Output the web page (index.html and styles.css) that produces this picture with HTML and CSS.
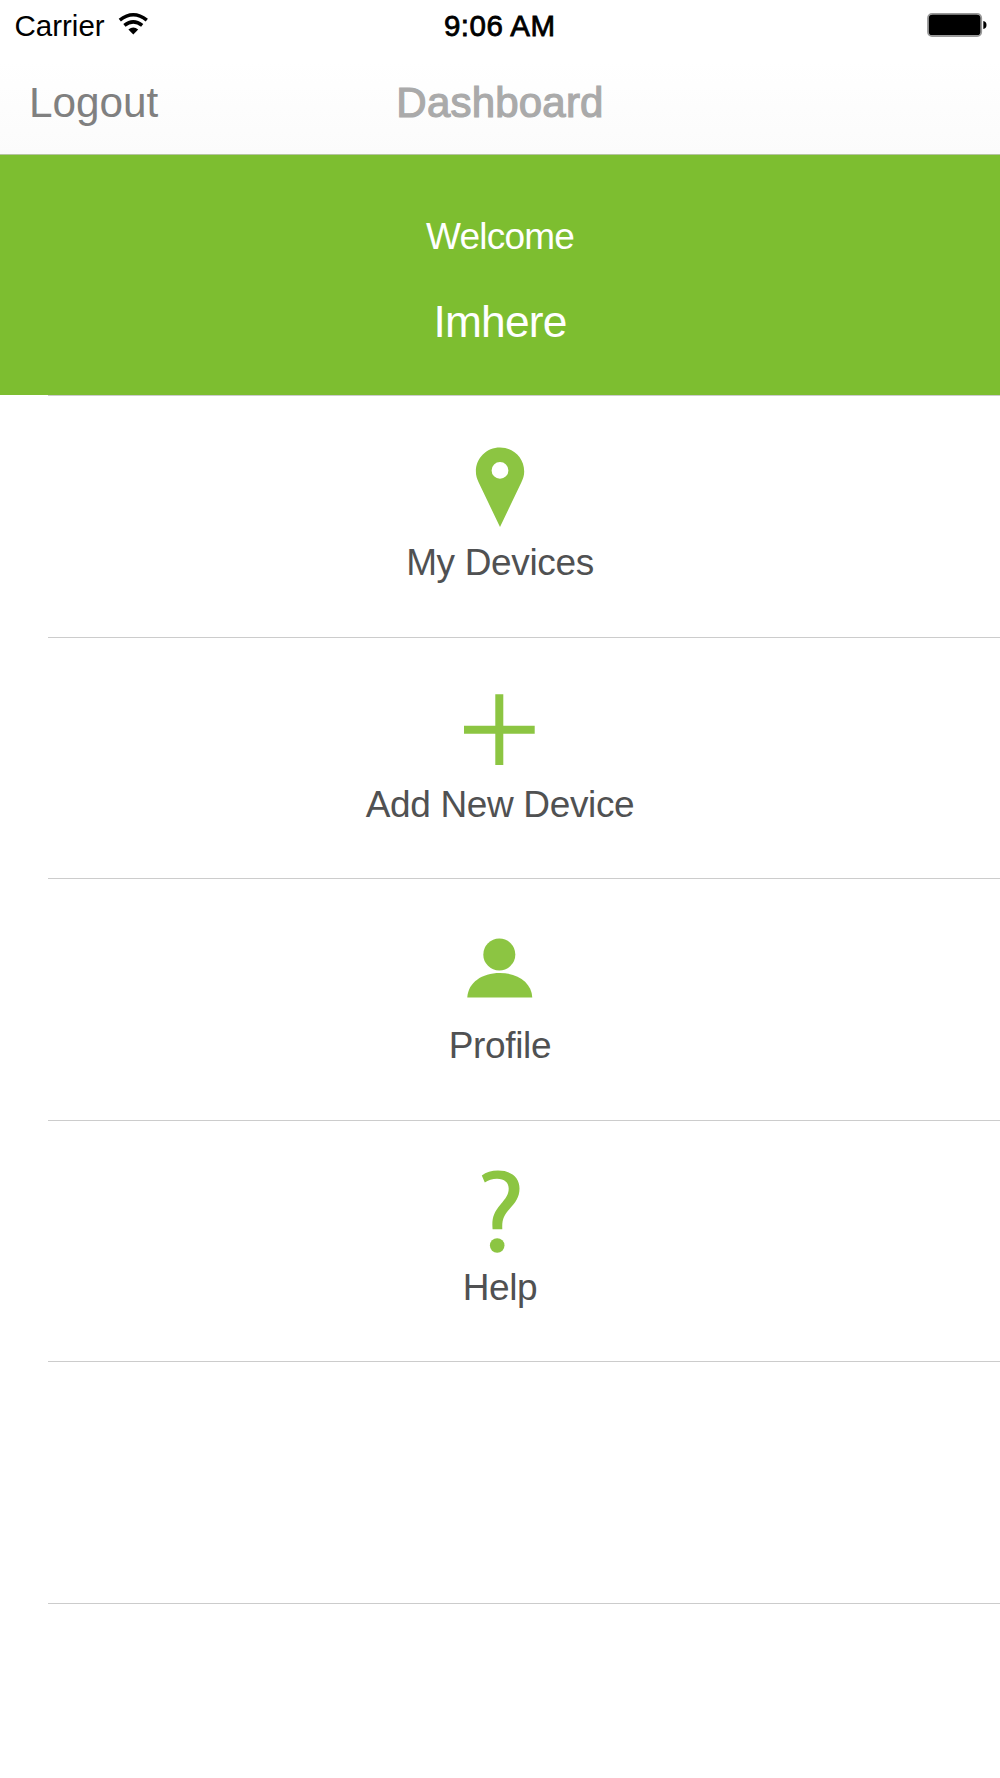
FILE: index.html
```html
<!DOCTYPE html>
<html lang="en">
<head>
<meta charset="utf-8">
<title>Dashboard</title>
<link rel="stylesheet" href="styles.css">
</head>
<body>
<header class="top">
  <div class="status">
    <div class="carrier"><span>Carrier</span>
      <svg class="wifi" viewBox="118 12 31 23" width="31" height="23"><g fill="none" stroke="#000" stroke-width="3.5"><path d="M119.8 20.2Q133.3 9.3 146.8 20.2"/><path d="M124.4 25.4Q133.3 18.3 142.2 25.4"/></g><path d="M128.4 29.5Q133.3 25.5 138.2 29.5L133.3 34.5Z"/></svg>
    </div>
    <div class="time">9:06 AM</div>
    <svg class="battery" viewBox="926 12 62 26" width="62" height="26"><rect x="928" y="14" width="53.2" height="22" rx="4" fill="#000" stroke="#999" stroke-width="1.8"/><rect x="929.2" y="14.8" width="50.8" height="20" rx="3.5"/><path d="M983.3 21Q986.5 21.5 986.5 25T983.3 29Z"/></svg>
  </div>
  <nav class="nav">
    <a class="logout">Logout</a>
    <h1 class="title">Dashboard</h1>
  </nav>
</header>
<section class="welcome">
  <div class="greeting">Welcome</div>
  <div class="name">Imhere</div>
</section>
<main class="menu">
  <a class="row">
    <svg class="icon" viewBox="450 435.5 100 100"><path fill-rule="evenodd" d="M500 447C513.5 447 524.2 457.5 524.2 471C524.2 475 523 478.5 521.3 482L500 526.5L478.7 482C477 478.5 475.9 475 475.9 471C475.9 457.5 486.5 447 500 447ZM500 461.5A8.4 8.4 0 1 0 500 478.3A8.4 8.4 0 1 0 500 461.5Z"/></svg>
    <span class="label">My Devices</span>
  </a>
  <a class="row">
    <svg class="icon" viewBox="450 677 100 100"><path d="M495.3 694.3H503.3V725.8H534.7V733.8H503.3V765H495.3V733.8H464V725.8H495.3Z"/></svg>
    <span class="label">Add New Device</span>
  </a>
  <a class="row">
    <svg class="icon" viewBox="450 918.5 100 100"><circle cx="499.3" cy="954" r="16"/><path d="M467.3 997C468 982 482 972.5 499.8 972.5S531.6 982 532.3 997Z"/></svg>
    <span class="label">Profile</span>
  </a>
  <a class="row">
    <svg class="icon" viewBox="450 1160 100 100"><path d="M481.8 1175.5C486 1172.5 491.5 1170.6 498 1170.6C512 1170.6 519.5 1178 519.5 1188.5C519.5 1197 515.5 1202.5 509.5 1209C504 1215.5 501.8 1219 502.3 1229.3H492.6C491.6 1219 493.5 1212.5 500.5 1204.5C506 1198 508.7 1194.5 508.7 1188.5C508.7 1182.5 504.5 1178.7 497 1178.7C492.5 1178.7 488 1180.2 484.8 1182.5Z"/><circle cx="497.2" cy="1245.5" r="7.3"/></svg>
    <span class="label">Help</span>
  </a>
  <div class="row"></div>
  <div class="row last"></div>
</main>
</body>
</html>
```
FILE: styles.css
```css
* { box-sizing: border-box; }

body {
  margin: 0;
  min-height: 1778px;
  background: #fff;
  color: #505152;
  font-family: "Liberation Sans", Arial, sans-serif;
}

.top {
  height: 155px;
  background: linear-gradient(#fff 40%, #fbfbfb);
  border-bottom: 1px solid #b5c4a0;
}

.status {
  display: grid;
  grid-template-columns: 1fr auto 1fr;
  height: 51px;
  padding: 0 12px 0 14.5px;
  color: #000;
  font-size: 29.5px;
  line-height: 51px;
}

.carrier {
  display: flex;
  gap: 13.5px;
}

.wifi { margin-top: 12px; }

.time {
  margin-left: -3px;
  letter-spacing: 0.5px;
  -webkit-text-stroke: 0.8px #000;
}

.battery {
  justify-self: end;
  margin-top: 12px;
}

.nav {
  display: grid;
  grid-template-columns: 1fr auto 1fr;
  height: 103px;
  padding: 0 28px;
  line-height: 104px;
}

.logout {
  padding-left: 1px;
  color: #808080;
  font-size: 42.3px;
}

.title {
  margin: 0;
  color: #aaa;
  font-size: 42px;
  font-weight: 400;
  letter-spacing: 0.2px;
  -webkit-text-stroke: 1.2px #aaa;
}

.welcome {
  height: 240px;
  padding-top: 57px;
  background: #7dbe30;
  color: #fff;
  text-align: center;
}

.greeting {
  height: 50px;
  font-size: 37px;
  letter-spacing: -0.8px;
  line-height: 50px;
}

.name {
  margin-top: 32px;
  font-size: 44.3px;
  letter-spacing: -0.8px;
  line-height: 56px;
}

.row {
  display: flex;
  flex-direction: column;
  align-items: center;
  height: 241.5px;
  padding-top: 40.5px;
  background: linear-gradient(#ccc, #ccc) right top / calc(100% - 48px) 1px no-repeat;
}

.row.last { height: 140px; }

.icon {
  width: 100px;
  height: 100px;
  fill: #8cc542;
}

.label {
  margin-top: 2.5px;
  font-size: 37px;
  letter-spacing: -0.35px;
  line-height: 50px;
}
```
